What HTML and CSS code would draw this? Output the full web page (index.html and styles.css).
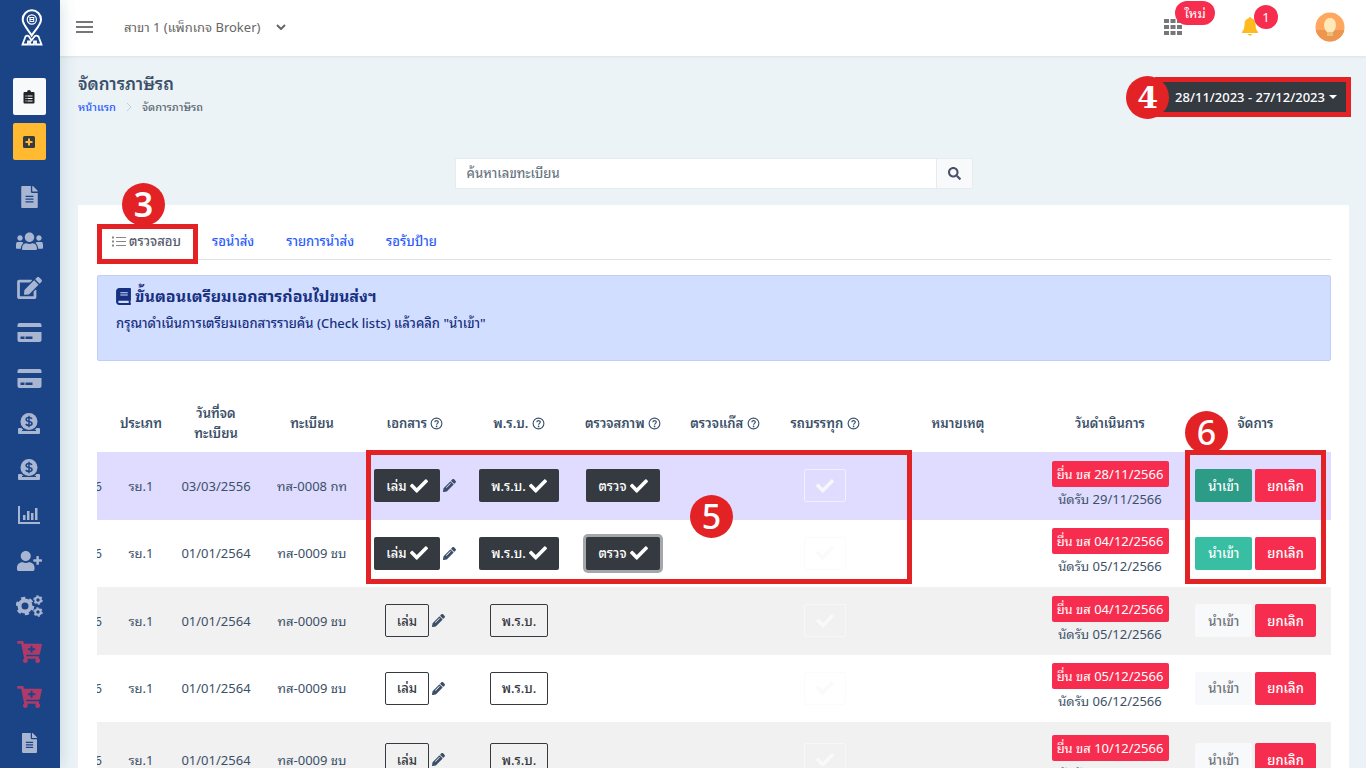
FILE: index.html
```html
<!DOCTYPE html>
<html lang="th">
<head>
<meta charset="utf-8">
<meta name="viewport" content="width=device-width, initial-scale=1">
<title>จัดการภาษีรถ</title>
<link rel="stylesheet" href="styles.css">
</head>
<body>
<svg class="sprite" aria-hidden="true">
  <symbol id="check" viewBox="0 0 512 512"><path d="M173.898 439.404l-166.4-166.4c-9.997-9.997-9.997-26.206 0-36.204l36.203-36.204c9.997-9.998 26.207-9.998 36.204 0L192 312.69 432.095 72.596c9.997-9.997 26.207-9.997 36.204 0l36.203 36.204c9.997 9.997 9.997 26.206 0 36.204l-294.4 294.401c-9.998 9.997-26.207 9.997-36.204-.001z"/></symbol>
  <symbol id="search" viewBox="0 0 512 512"><path d="M505 442.7L405.3 343c-4.5-4.5-10.6-7-17-7H372c27.6-35.3 44-79.7 44-128C416 93.1 322.9 0 208 0S0 93.1 0 208s93.1 208 208 208c48.3 0 92.7-16.4 128-44v16.3c0 6.4 2.5 12.5 7 17l99.7 99.7c9.4 9.4 24.6 9.4 33.9 0l28.3-28.3c9.4-9.4 9.4-24.6.1-34zM208 336c-70.7 0-128-57.2-128-128 0-70.7 57.2-128 128-128 70.7 0 128 57.2 128 128 0 70.7-57.2 128-128 128z"/></symbol>
  <symbol id="pencil" viewBox="0 0 512 512"><path d="M497.9 142.1l-46.1 46.1c-4.7 4.7-12.3 4.7-17 0l-111-111c-4.7-4.7-4.7-12.3 0-17l46.1-46.1c18.7-18.7 49.1-18.7 67.9 0l60.1 60.1c18.8 18.7 18.8 49.1 0 67.9zM284.2 99.8L21.6 362.4.4 483.9c-2.9 16.4 11.4 30.6 27.8 27.8l121.5-21.3 262.6-262.6c4.7-4.7 4.7-12.3 0-17l-111-111c-4.8-4.7-12.4-4.7-17.1 0zM124.1 339.9c-5.5-5.5-5.5-14.3 0-19.8l154-154c5.5-5.5 14.3-5.5 19.8 0s5.5 14.3 0 19.8l-154 154c-5.5 5.5-14.3 5.5-19.8 0z"/></symbol>
  <symbol id="edit" viewBox="0 0 576 512"><path d="M402.6 83.2l90.2 90.2c3.8 3.8 3.8 10 0 13.8L274.4 405.6l-92.8 10.3c-12.4 1.4-22.9-9.1-21.5-21.5l10.3-92.8L388.8 83.2c3.8-3.8 10-3.8 13.8 0zm162-22.9l-48.8-48.8c-15.2-15.2-39.9-15.2-55.2 0l-35.4 35.4c-3.8 3.8-3.8 10 0 13.8l90.2 90.2c3.8 3.8 10 3.8 13.8 0l35.4-35.4c15.2-15.3 15.2-40 0-55.2zM384 346.2V448H64V128h229.8c3.2 0 6.2-1.3 8.5-3.5l40-40c7.6-7.6 2.2-20.5-8.5-20.5H48C21.5 64 0 85.5 0 112v352c0 26.5 21.5 48 48 48h352c26.5 0 48-21.5 48-48V306.2c0-10.7-12.9-16-20.5-8.5l-40 40c-2.2 2.3-3.5 5.3-3.5 8.5z"/></symbol>
  <symbol id="file" viewBox="0 0 384 512"><path d="M224 136V0H24C10.7 0 0 10.7 0 24v464c0 13.3 10.7 24 24 24h336c13.3 0 24-10.7 24-24V160H248c-13.2 0-24-10.8-24-24zm64 236c0 6.600-5.400 12-12 12H108c-6.600 0-12-5.400-12-12v-8c0-6.600 5.400-12 12-12h168c6.600 0 12 5.400 12 12v8zm0-64c0 6.600-5.400 12-12 12H108c-6.600 0-12-5.400-12-12v-8c0-6.600 5.400-12 12-12h168c6.600 0 12 5.400 12 12v8zm0-72v8c0 6.600-5.400 12-12 12H108c-6.600 0-12-5.400-12-12v-8c0-6.600 5.400-12 12-12h168c6.600 0 12 5.400 12 12zm96-114.100v6.100H256V0h6.100c6.400 0 12.500 2.500 17 7l97.900 98c4.500 4.500 7 10.600 7 16.900z"/></symbol>
  <symbol id="users" viewBox="0 0 640 512"><path d="M96 224c35.3 0 64-28.7 64-64s-28.7-64-64-64-64 28.7-64 64 28.7 64 64 64zm448 0c35.3 0 64-28.7 64-64s-28.7-64-64-64-64 28.7-64 64 28.7 64 64 64zM30 256C12 262 0 290 0 330v60c0 14 10 26 24 26h90c6-50 10-90 60-132C160 262 150 256 128 256zm580 0c18 6 30 34 30 74v60c0 14-10 26-24 26h-90c-6-50-10-90-60-132 14-22 24-28 46-28zM320 256c61.900 0 112-50.100 112-112S381.900 32 320 32 208 82.100 208 144s50.100 112 112 112zm76.800 32h-8.300c-20.800 10-43.900 16-68.500 16s-47.600-6-68.500-16h-8.300C179.600 288 144 339.600 144 403.200V424c0 14 10 24 24 24h304c14 0 24-10 24-24v-20.800c0-63.600-35.600-115.200-99.200-115.200z"/></symbol>
  <symbol id="userplus" viewBox="0 0 640 512"><path d="M624 208h-64v-64c0-8.800-7.200-16-16-16h-32c-8.800 0-16 7.200-16 16v64h-64c-8.800 0-16 7.200-16 16v32c0 8.800 7.200 16 16 16h64v64c0 8.800 7.200 16 16 16h32c8.800 0 16-7.200 16-16v-64h64c8.800 0 16-7.200 16-16v-32c0-8.800-7.200-16-16-16zm-400 48c70.700 0 128-57.300 128-128S294.700 0 224 0 96 57.300 96 128s57.300 128 128 128zm89.600 32h-16.700c-22.200 10.200-46.900 16-72.900 16s-50.600-5.800-72.900-16h-16.700C60.200 288 0 348.200 0 422.400V464c0 26.500 21.500 48 48 48h352c26.500 0 48-21.500 48-48v-41.600c0-74.200-60.200-134.400-134.400-134.400z"/></symbol>
  <symbol id="cart" viewBox="0 0 576 512"><path d="M504.717 320H211.572l6.545 32h268.418c15.401 0 26.816 14.301 23.403 29.319l-5.517 24.276C523.112 414.668 536 433.828 536 456c0 31.202-25.519 56.444-56.824 55.994-29.823-.429-54.35-24.631-55.155-54.447-.44-16.287 6.085-31.049 16.803-41.548H231.176C241.553 426.165 248 440.326 248 456c0 31.813-26.528 57.431-58.67 55.938-28.54-1.325-51.751-24.385-53.251-52.917-1.158-22.034 10.436-41.455 28.051-51.586L93.883 64H24C10.745 64 0 53.255 0 40V24C0 10.745 10.745 0 24 0h102.529c11.401 0 21.228 8.021 23.513 19.19L159.208 64H551.99c15.401 0 26.816 14.301 23.403 29.319l-47.273 208C525.637 312.246 515.923 320 504.717 320zM408 168h-48v-40c0-8.837-7.163-16-16-16h-16c-8.837 0-16 7.163-16 16v40h-48c-8.837 0-16 7.163-16 16v16c0 8.837 7.163 16 16 16h48v40c0 8.837 7.163 16 16 16h16c8.837 0 16-7.163 16-16v-40h48c8.837 0 16-7.163 16-16v-16c0-8.837-7.163-16-16-16z"/></symbol>
  <symbol id="book" viewBox="0 0 448 512"><path d="M448 360V24c0-13.3-10.7-24-24-24H96C43 0 0 43 0 96v320c0 53 43 96 96 96h328c13.3 0 24-10.7 24-24v-16c0-7.5-3.5-14.3-8.9-18.7-4.2-15.4-4.2-59.3 0-74.7 5.400-4.300 8.900-11.100 8.900-18.600zM128 134c0-3.300 2.700-6 6-6h212c3.300 0 6 2.700 6 6v20c0 3.300-2.700 6-6 6H134c-3.300 0-6-2.700-6-6v-20zm0 64c0-3.300 2.700-6 6-6h212c3.300 0 6 2.700 6 6v20c0 3.300-2.700 6-6 6H134c-3.300 0-6-2.700-6-6v-20zm253.400 250H96c-17.700 0-32-14.300-32-32 0-17.600 14.400-32 32-32h285.400c-1.900 17.100-1.900 46.900 0 64z"/></symbol>
  <symbol id="card" viewBox="0 0 24 20"><path d="M2 0h20a2 2 0 0 1 2 2v2H0V2a2 2 0 0 1 2-2zM0 9h24v8a2 2 0 0 1-2 2H2a2 2 0 0 1-2-2zm3 4.500v2.500h4v-2.500zm5 0v2.500h7v-2.500z" fill-rule="evenodd"/></symbol>
  <symbol id="donate" viewBox="0 0 22 22"><path d="M1 15h2.500a9 9 0 0 0 2 2H4v1h14v-1h-1.500a9 9 0 0 0 2-2H21a1 1 0 0 1 1 1v4a1 1 0 0 1-1 1H1a1 1 0 0 1-1-1v-4a1 1 0 0 1 1-1z"/><circle cx="11" cy="8.500" r="8.500"/><path d="M14 5.800C13.300 4.700 12.200 4.500 11 4.500c-1.800 0-2.900.8-2.900 2 0 2.800 5.900 1.200 5.900 4 0 1.300-1.200 2-3 2-1.400 0-2.500-.4-3.200-1.500M11 2.800v11.400" fill="none" stroke="#1b4487" stroke-width="1.500"/></symbol>
  <symbol id="chart" viewBox="0 0 22 20"><path d="M0 1h2v16h20v2H0zM5 10h2.500v5H5zM9 6h2.500v9H9zM13 8h2.500v7H13zM17 3h2.500v12H17z"/></symbol>
  <symbol id="cogs" viewBox="0 0 27 22"><g fill="none" stroke="currentColor"><circle cx="9" cy="11" r="5.500" stroke-width="4"/><circle cx="9" cy="11" r="8" stroke-width="2.500" stroke-dasharray="4.190 4.188"/><circle cx="22" cy="5" r="2.700" stroke-width="2"/><circle cx="22" cy="5" r="4" stroke-width="1.500" stroke-dasharray="2.095 2.094"/><circle cx="22" cy="17" r="2.700" stroke-width="2"/><circle cx="22" cy="17" r="4" stroke-width="1.500" stroke-dasharray="2.095 2.094"/></g></symbol>
  <symbol id="help" viewBox="0 0 14 14"><circle cx="7" cy="7" r="5.800" fill="none" stroke="currentColor" stroke-width="1.200"/><path d="M5.200 5.700C5.300 3.400 8.900 3.500 8.900 5.500 8.900 6.900 7.100 6.900 7.100 8.400" fill="none" stroke="currentColor" stroke-width="1.300"/><circle cx="7.100" cy="10.100" r=".9"/></symbol>
</svg>

<div class="shell">
  <nav class="sidebar" aria-label="เมนูหลัก">
    <a class="brand" href="#" aria-label="หน้าแรก"><svg width="22" height="38" viewBox="0 0 22 38" fill="none" stroke="#fff"><path d="M10.700 26.500C8 21.500 1.700 16 1.700 10.500a9 9 0 0 1 18.300 0c0 5.500-6.300 11-9.300 16z" stroke-width="2"/><circle cx="10.800" cy="10.500" r="4.600" stroke-width="1.200"/><path d="M8.300 8.500h5M8.700 10.500h4.300M9 12.500h3.700M9 9v4M12.700 9v4"/><path d="M4.500 27.500L1.500 35.500h5.500v-3h2v3h4v-3h2v3h5.500l-3-8c-1.500-1.300-3-1.300-4 0l-3 4-2.500-4c-1-1.300-2.500-1.300-3.500 0z" stroke-width="1.800"/></svg></a>
    <div class="quick">
      <button class="quick-btn" aria-label="รายการ"><svg width="12" height="14" viewBox="0 0 12 14"><path d="M1.500 2H4a2 2 0 0 1 4 0h2.500A1.200 1.200 0 0 1 11.500 3v9.500a1.200 1.200 0 0 1-1 1h-9a1.200 1.200 0 0 1-1-1V3a1.200 1.200 0 0 1 1-1z"/><path d="M2.500 6h1M4.500 6h5M2.500 8.500h1M4.500 8.500h5M2.500 11h1M4.500 11h5" stroke="#f8f9fa"/></svg></button>
      <button class="quick-btn quick-add" aria-label="เพิ่ม"><svg width="12" height="12" viewBox="0 0 12 12"><rect width="12" height="12" rx="1.500"/><path d="M6 2.500v7M2.500 6h7" stroke="#ffba32" stroke-width="2"/></svg></button>
    </div>
    <div class="menu">
      <a href="#" aria-label="เอกสาร"><svg width="17" height="22"><use href="#file"/></svg></a>
      <a href="#" aria-label="ลูกค้า"><svg width="27" height="22"><use href="#users"/></svg></a>
      <a href="#" aria-label="แก้ไข"><svg width="25" height="22"><use href="#edit"/></svg></a>
      <a href="#" aria-label="บัตร"><svg width="25" height="20"><use href="#card"/></svg></a>
      <a href="#" aria-label="ชำระเงิน"><svg width="25" height="20"><use href="#card"/></svg></a>
      <a href="#" aria-label="รายรับ"><svg width="22" height="22"><use href="#donate"/></svg></a>
      <a href="#" aria-label="รายจ่าย"><svg width="22" height="22"><use href="#donate"/></svg></a>
      <a href="#" aria-label="รายงาน"><svg width="22" height="20"><use href="#chart"/></svg></a>
      <a href="#" aria-label="เพิ่มผู้ใช้"><svg width="27" height="20"><use href="#userplus"/></svg></a>
      <a href="#" aria-label="ตั้งค่า"><svg width="27" height="22"><use href="#cogs"/></svg></a>
      <a class="hot" href="#" aria-label="สั่งซื้อ"><svg width="25" height="22"><use href="#cart"/></svg></a>
      <a class="hot" href="#" aria-label="สั่งซื้อเพิ่ม"><svg width="25" height="22"><use href="#cart"/></svg></a>
      <a href="#" aria-label="คู่มือ"><svg width="17" height="20"><use href="#file"/></svg></a>
    </div>
  </nav>

  <div class="page">
    <header class="topbar">
      <button class="icon-btn" aria-label="เมนู"><svg width="17" height="12" viewBox="0 0 17 12"><path d="M0 1h17M0 6h17M0 11h17" stroke="#777" stroke-width="2"/></svg></button>
      <button class="branch">สาขา 1 (แพ็กเกจ Broker)<svg width="10" height="6" viewBox="0 0 10 6" fill="none" stroke="#666" stroke-width="2"><path d="M1 1l4 4 4-4"/></svg></button>
      <div class="tools">
        <button class="icon-btn tool" aria-label="แอป"><svg width="18" height="16" viewBox="0 0 18 16"><path d="M0 0h5v4H0zM6.500 0h5v4h-5zM13 0h5v4h-5zM0 6h5v4H0zM6.500 6h5v4h-5zM13 6h5v4h-5zM0 12h5v4H0zM6.500 12h5v4h-5zM13 12h5v4h-5z" fill="#777"/></svg><span class="badge badge-new">ใหม่</span></button>
        <button class="icon-btn tool bell" aria-label="แจ้งเตือน"><svg width="16" height="19" viewBox="0 0 16 19"><path d="M8 0c.8 0 1.200.6 1.200 1.300C12.300 2 13.500 4.500 13.500 7.500c0 4 1 5.500 2.500 7.500v1H0v-1c1.500-2 2.500-3.500 2.500-7.500 0-3 1.200-5.500 4.300-6.200C6.800.6 7.200 0 8 0zM6 17h4c-.3 2-3.700 2-4 0z"/></svg><span class="badge badge-count">1</span></button>
        <button class="icon-btn" aria-label="บัญชี"><svg width="30" height="30" viewBox="0 0 30 30"><clipPath id="av"><circle cx="15" cy="15" r="14.500"/></clipPath><g clip-path="url(#av)"><path fill="#ffa75f" d="M0 0h30v30H0z"/><path fill="#ee954f" d="M0 18h30v12H0z"/><path fill="#e8c07a" d="M12 18h6v6h-6z"/><path fill="#ffe9b8" d="M15 6c7.500 0 7 11 3 14h-6C8 17 7.500 6 15 6z"/></g></svg></button>
      </div>
    </header>

    <main class="content">
      <div class="heading">
        <div>
          <h1>จัดการภาษีรถ</h1>
          <nav class="crumbs" aria-label="breadcrumb"><a href="#">หน้าแรก</a><svg width="6" height="10" viewBox="0 0 6 10" fill="none" stroke="#c3cdd4"><path d="M1 1l4 4-4 4"/></svg><span>จัดการภาษีรถ</span></nav>
        </div>
        <div class="range"><button class="range-btn">28/11/2023 - 27/12/2023<i class="caret"></i></button><span class="step step-4">4</span></div>
      </div>

      <form class="search"><input type="text" aria-label="ค้นหาเลขทะเบียน" placeholder="ค้นหาเลขทะเบียน"><button type="button" aria-label="ค้นหา"><svg width="13" height="13"><use href="#search"/></svg></button></form>

      <section class="card">
        <nav class="tabs" aria-label="สถานะ">
          <a class="active" href="#"><svg width="14" height="11" viewBox="0 0 14 11" stroke="#888" fill="none"><path d="M0 1.500h2M0 5.500h2M0 9.500h2" stroke-width="2"/><path d="M4 1.500h10M4 5.500h10M4 9.500h10"/></svg>ตรวจสอบ<span class="frame frame-3"></span><span class="step step-3">3</span></a>
          <a href="#">รอนำส่ง</a>
          <a href="#">รายการนำส่ง</a>
          <a href="#">รอรับป้าย</a>
        </nav>
        <div class="notice">
          <h2><svg width="15" height="17"><use href="#book"/></svg>ขั้นตอนเตรียมเอกสารก่อนไปขนส่งฯ</h2>
          <p>กรุณาดำเนินการเตรียมเอกสารรายคัน (Check lists) แล้วคลิก "นำเข้า"</p>
        </div>

        <div class="grid">
          <table>
            <colgroup><col class="c-cut"><col class="c-type"><col class="c-date"><col class="c-plate"><col class="c-doc"><col class="c-act"><col class="c-doc"><col class="c-gas"><col class="c-act"><col><col class="c-when"><col class="c-manage"></colgroup>
            <thead><tr><th></th><th>ประเภท</th><th>วันที่จด<br>ทะเบียน</th><th>ทะเบียน</th><th>เอกสาร <svg class="help"><use href="#help"/></svg></th><th>พ.ร.บ. <svg class="help"><use href="#help"/></svg></th><th>ตรวจสภาพ <svg class="help"><use href="#help"/></svg></th><th>ตรวจแก๊ส <svg class="help"><use href="#help"/></svg></th><th>รถบรรทุก <svg class="help"><use href="#help"/></svg></th><th>หมายเหตุ</th><th>วันดำเนินการ</th><th>จัดการ</th></tr></thead>
            <tbody>
              <tr class="selected"><td class="cut"><span>6</span></td><td>รย.1</td><td>03/03/2556</td><td>ทส-0008 กท</td>
                <td><div class="pair"><button class="btn dark">เล่ม<svg class="tick"><use href="#check"/></svg></button><button class="pen" aria-label="แก้ไข"><svg><use href="#pencil"/></svg></button></div></td>
                <td><button class="btn dark">พ.ร.บ.<svg class="tick"><use href="#check"/></svg></button></td>
                <td><button class="btn dark">ตรวจ<svg class="tick"><use href="#check"/></svg></button></td><td></td>
                <td><button class="btn ghost" aria-label="รถบรรทุก"><svg class="tick"><use href="#check"/></svg></button></td><td></td>
                <td><span class="due">ยื่น ขส 28/11/2566</span><span class="meet">นัดรับ 29/11/2566</span></td>
                <td><div class="pair"><button class="btn teal pressed">นำเข้า</button><button class="btn red">ยกเลิก</button></div></td></tr>
              <tr><td class="cut"><span>6</span></td><td>รย.1</td><td>01/01/2564</td><td>ทส-0009 ชบ</td>
                <td><div class="pair"><button class="btn dark">เล่ม<svg class="tick"><use href="#check"/></svg></button><button class="pen" aria-label="แก้ไข"><svg><use href="#pencil"/></svg></button></div></td>
                <td><button class="btn dark">พ.ร.บ.<svg class="tick"><use href="#check"/></svg></button></td>
                <td><button class="btn dark focused">ตรวจ<svg class="tick"><use href="#check"/></svg></button></td><td></td>
                <td><button class="btn ghost" aria-label="รถบรรทุก"><svg class="tick"><use href="#check"/></svg></button></td><td></td>
                <td><span class="due">ยื่น ขส 04/12/2566</span><span class="meet">นัดรับ 05/12/2566</span></td>
                <td><div class="pair"><button class="btn teal">นำเข้า</button><button class="btn red">ยกเลิก</button></div></td></tr>
              <tr><td class="cut"><span>6</span></td><td>รย.1</td><td>01/01/2564</td><td>ทส-0009 ชบ</td>
                <td><div class="pair"><button class="btn line">เล่ม</button><button class="pen" aria-label="แก้ไข"><svg><use href="#pencil"/></svg></button></div></td>
                <td><button class="btn line">พ.ร.บ.</button></td><td></td><td></td>
                <td><button class="btn ghost" aria-label="รถบรรทุก"><svg class="tick"><use href="#check"/></svg></button></td><td></td>
                <td><span class="due">ยื่น ขส 04/12/2566</span><span class="meet">นัดรับ 05/12/2566</span></td>
                <td><div class="pair"><button class="btn pale" disabled>นำเข้า</button><button class="btn red">ยกเลิก</button></div></td></tr>
              <tr><td class="cut"><span>6</span></td><td>รย.1</td><td>01/01/2564</td><td>ทส-0009 ชบ</td>
                <td><div class="pair"><button class="btn line">เล่ม</button><button class="pen" aria-label="แก้ไข"><svg><use href="#pencil"/></svg></button></div></td>
                <td><button class="btn line">พ.ร.บ.</button></td><td></td><td></td>
                <td><button class="btn ghost" aria-label="รถบรรทุก"><svg class="tick"><use href="#check"/></svg></button></td><td></td>
                <td><span class="due">ยื่น ขส 05/12/2566</span><span class="meet">นัดรับ 06/12/2566</span></td>
                <td><div class="pair"><button class="btn pale" disabled>นำเข้า</button><button class="btn red">ยกเลิก</button></div></td></tr>
              <tr class="tall"><td class="cut"><span>6</span></td><td>รย.1</td><td>01/01/2564</td><td>ทส-0009 ชบ</td>
                <td><div class="pair"><button class="btn line">เล่ม</button><button class="pen" aria-label="แก้ไข"><svg><use href="#pencil"/></svg></button></div></td>
                <td><button class="btn line">พ.ร.บ.</button></td><td></td><td></td>
                <td><button class="btn ghost" aria-label="รถบรรทุก"><svg class="tick"><use href="#check"/></svg></button></td><td></td>
                <td><span class="due">ยื่น ขส 10/12/2566</span><span class="meet">นัดรับ 11/12/2566</span></td>
                <td><div class="pair"><button class="btn pale" disabled>นำเข้า</button><button class="btn red">ยกเลิก</button></div></td></tr>
            </tbody>
          </table>
          <span class="frame frame-5"></span><span class="step step-5">5</span>
          <span class="frame frame-6"></span><span class="step step-6">6</span>
        </div>
      </section>
    </main>
  </div>
</div>
</body>
</html>
```
FILE: styles.css
```css
* { box-sizing: border-box; }
body {
  margin: 0;
  font-family: "Noto Sans", "Noto Sans Thai Looped", "Noto Sans Thai", "Loma", sans-serif;
  font-size: 13px;
  line-height: 20px;
  color: #3b5068;
}
button, input { font: inherit; color: inherit; margin: 0; }
button { cursor: pointer; }
a { color: #2a5cff; text-decoration: none; }
svg { fill: currentColor; flex: none; }
.sprite { position: absolute; width: 0; height: 0; }

.shell { display: flex; height: 100vh; overflow: hidden; }

/* Sidebar */
.sidebar {
  flex: none;
  width: 60px;
  padding-right: 2px;
  display: flex;
  flex-direction: column;
  align-items: center;
  background: #1b4487;
  box-shadow: 0 0 16px rgba(40, 80, 100, .2);
  z-index: 2;
}
.brand { display: flex; padding: 9px 0 0 6px; height: 78px; }
.brand svg { fill: none; }
.quick { display: flex; flex-direction: column; gap: 8px; margin-bottom: 14px; }
.quick-btn {
  width: 33px;
  height: 37px;
  padding: 0;
  display: flex;
  align-items: center;
  justify-content: center;
  border: 0;
  border-radius: 2px;
  background: #f8f9fa;
  color: #212529;
}
.quick-add { background: #ffba32; color: #343a40; }
.menu { display: grid; grid-auto-rows: 45px 46px; }
.menu a { display: flex; align-items: center; justify-content: center; color: #a9b6d2; }
.menu .hot { color: #ae3a6a; }

/* Top bar */
.page { flex: 1; min-width: 0; display: flex; flex-direction: column; background: #ebf3f7; }
.topbar {
  flex: none;
  height: 56px;
  display: flex;
  align-items: center;
  padding: 0 21px 3px 16px;
  background: #fff;
  box-shadow: 0 1px 3px rgba(60, 90, 110, .1);
}
.icon-btn { display: flex; padding: 0; border: 0; background: none; }
.branch { display: flex; align-items: center; gap: 16px; margin-left: 31px; padding: 0; border: 0; background: none; color: #666; }
.branch svg, .tabs svg, .crumbs svg { fill: none; }
.tools { display: flex; align-items: center; gap: 60px; margin-left: auto; }
.tool { position: relative; }
.bell { color: #ffba1f; margin-right: -3px; }
.badge {
  position: absolute;
  height: 24px;
  border-radius: 12px;
  background: #f72d50;
  color: #fff;
  line-height: 24px;
}
.badge-new { left: 11px; bottom: 10px; width: 40px; }
.badge-count { left: 12px; bottom: 7px; width: 24px; }

/* Page heading */
.content { flex: 1; min-height: 0; padding: 16px 17px 0 18px; }
.heading { display: flex; justify-content: space-between; align-items: flex-start; height: 86px; }
h1 { margin: 0; font-size: 17px; line-height: 24px; font-weight: 600; color: #3b5068; }
.crumbs { display: flex; align-items: center; gap: 10px; font-size: 11px; line-height: 22px; font-weight: 500; color: #5d6873; }
.range { position: relative; margin: 5px -2px 0 0; border: 5px solid #e32225; }
.range-btn { display: flex; align-items: center; gap: 4px; height: 30px; padding: 0 9px 0 15px; border: 0; background: #343a40; color: #fff; font-weight: 500; }
.caret { border: 4px solid transparent; border-top-color: #fff; border-bottom: 0; }

.search { display: flex; width: 518px; height: 31px; margin: 0 auto 16px; }
.search input { flex: 1; min-width: 0; padding: 0 11px 2px; border: 1px solid #e6ebee; background: #fff; outline: 0; }
.search input::placeholder { color: #69757f; opacity: 1; font-weight: 500; }
.search button { width: 36px; padding: 0; display: flex; align-items: center; justify-content: center; border: 1px solid #e9ecef; border-left: 0; background: #f8f9fa; color: #49506a; }

/* Card */
.card { min-height: 100%; padding: 18px 18px 0 19px; background: #fff; }
.tabs { display: flex; height: 37px; border-bottom: 1px solid #dfe2e5; margin-bottom: 15px; font-weight: 500; }
.tabs a { position: relative; display: flex; align-items: center; gap: 3px; padding: 0 16px; }
.tabs .active { padding: 0 15px; color: #555b6b; }
.notice { height: 86px; padding: 8px 18px; border: 1px solid #bfcff8; border-radius: 2px; background: #d2deff; color: #173081; }
.notice h2 { display: flex; align-items: center; gap: 4px; margin: 0; font-size: 16px; line-height: 24px; font-weight: 700; }
.notice p { margin: 5px 0 0; font-weight: 500; }

/* Table */
.grid { position: relative; margin-top: 33px; }
table { width: 100%; table-layout: fixed; border-collapse: collapse; }
.c-cut { width: 15px; }
.c-type { width: 58px; }
.c-date { width: 92px; }
.c-plate { width: 100px; }
.c-doc { width: 106px; }
.c-act { width: 102px; }
.c-gas { width: 98px; }
.c-when { width: 140px; }
.c-manage { width: 151px; }
th, td { padding: 0 0 1px; text-align: center; white-space: nowrap; }
th { height: 58px; font-weight: 600; }
td { height: 68px; }
tr:nth-child(even) td { height: 67px; }
.tall td { height: 76px; }
tbody tr:nth-child(odd) { background: #f1f1f1; }
tbody tr.selected { background: #dfdcff; }
.cut span { display: flex; justify-content: flex-end; width: 5px; overflow: hidden; }
.help { width: 13px; height: 13px; vertical-align: -2px; }
.tick { width: 18px; height: 18px; }
.btn {
  display: inline-flex;
  align-items: center;
  justify-content: center;
  gap: 3px;
  height: 33px;
  padding: 0 11px;
  border: 1px solid transparent;
  border-radius: 2px;
  vertical-align: middle;
  font-weight: 500;
}
.dark { background: #343a40; color: #fff; }
.focused { box-shadow: 0 0 0 3px #a5a7aa; }
.line { background: none; border-color: #343a40; color: #343a40; }
.ghost { width: 42px; background: none; border-color: rgba(248, 249, 250, .7); color: rgba(248, 249, 250, .9); }
.teal, .pale { padding: 0 12px; }
.teal { background: #37bea3; color: #fff; }
.pressed { background: #2c9c86; }
.red { background: #f72d50; color: #fff; }
.pale { background: #f8f9fa; color: #6c7278; }
.pair { display: flex; align-items: center; justify-content: center; gap: 3px; }
.pen { padding: 0; border: 0; background: none; display: flex; }
.pen svg { width: 13px; height: 13px; }
.due { display: block; width: 117px; height: 26px; margin: 0 auto; border-radius: 2px; background: #f72d50; color: #fff; line-height: 26px; }
.meet { display: block; line-height: 24px; }

/* Numbered walkthrough marks */
.frame { position: absolute; border: 5px solid #e32225; pointer-events: none; }
.frame-3 { inset: 1px -2px -5px 0; }
.frame-5 { left: 269px; top: 56px; width: 546px; height: 134px; }
.frame-6 { right: 5px; top: 56px; width: 141px; height: 134px; }
.step {
  position: absolute;
  width: 43px;
  height: 43px;
  border-radius: 50%;
  background: #e32225;
  color: #fff;
  font: 500 34px/43px "Noto Sans", sans-serif;
  text-align: center;
}
.step-3 { left: 25px; bottom: 33px; font-weight: 600; }
.step-4 { left: -34px; top: -6px; font-family: "DejaVu Serif", serif; font-size: 30px; font-weight: 700; }
.step-5 { left: 593px; top: 101px; }
.step-6 { right: 103px; top: 17px; }
```
